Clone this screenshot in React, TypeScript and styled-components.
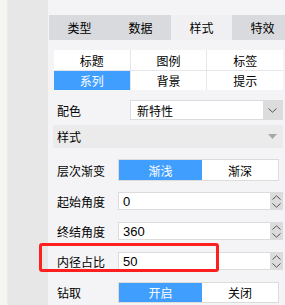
import React from 'react';
import styled, { createGlobalStyle } from 'styled-components';

const Global = createGlobalStyle`
  html, body { margin: 0; padding: 0; background: #f4f4f6; }
  body { font-family: "Noto Sans CJK SC", "Liberation Sans", sans-serif; font-size: 12px; color: #000; }
`

const Page = styled.div`
  display: flex;
  width: 285px;
  height: 305px;
  overflow: hidden;
`

const Edge = styled.div`
  width: 7px;
  background: #f6f6f1;
  border-right: 1px solid #ececec;
`

const Side = styled.div`
  width: 40px;
  background: #e7e7e7;
`

const Panel = styled.div`
  flex: 1;
  min-width: 0;
  padding-left: 1px;
  background: #f4f4f6;
`

const TabBar = styled.div`
  display: flex;
  margin-top: 15px;
  height: 25px;
  width: 244px;
`

const Tab = styled.div<{ $on?: boolean }>`
  flex: 0 0 61px;
  display: flex;
  align-items: center;
  justify-content: center;
  background: ${p => p.$on ? '#f0f0f2' : '#d9dadd'};
  font-size: 12px;
`

const SubGrid = styled.div`
  display: grid;
  grid-template-columns: repeat(3, 1fr);
  grid-template-rows: 20px 19px;
  gap: 1px;
  margin: 10px 2px 0 5px;
  background: #e6e6ea;
`

const SubTab = styled.div<{ $on?: boolean }>`
  display: flex;
  align-items: center;
  justify-content: center;
  background: ${p => p.$on ? '#409eff' : '#fff'};
  color: ${p => p.$on ? '#fff' : '#000'};
`

const Row = styled.div<{ $top: number; $h: number }>`
  position: relative;
  display: flex;
  align-items: center;
  margin-top: ${p => p.$top}px;
  height: ${p => p.$h}px;
  padding-left: 8px;
  padding-right: 2px;
`

const Label = styled.div<{ $w: number }>`
  width: ${p => p.$w}px;
  flex: 0 0 auto;
`

const Select = styled.div`
  flex: 1;
  height: 100%;
  display: flex;
  box-sizing: border-box;
  border: 1px solid #dcdcdc;
  background: #fff;
`

const SelectText = styled.div`
  flex: 1;
  display: flex;
  align-items: center;
  padding-left: 6px;
`

const SelectBtn = styled.div`
  width: 19px;
  display: flex;
  align-items: center;
  justify-content: center;
  background: #dcdcdc;
`

const Header = styled.div`
  display: flex;
  align-items: center;
  justify-content: space-between;
  margin: 5px 2px 0 4px;
  height: 23px;
  padding: 0 6px 0 4px;
  background: #ebebeb;
`

const Toggle = styled.div`
  width: 161px;
  height: 100%;
  display: grid;
  grid-template-columns: 83px 1fr;
  box-sizing: border-box;
  border: 1px solid #dcdcdc;
`

const ToggleBtn = styled.div<{ $on?: boolean }>`
  display: flex;
  align-items: center;
  justify-content: center;
  background: ${p => p.$on ? '#409eff' : '#fff'};
  color: ${p => p.$on ? '#fff' : '#000'};
  font-size: 12px;
`

const Num = styled.div`
  flex: 1;
  height: 100%;
  display: flex;
  box-sizing: border-box;
  border: 1px solid #dcdcdc;
  background: #fff;
`

const NumText = styled.div`
  flex: 1;
  display: flex;
  align-items: center;
  padding-left: 4px;
  font-family: "Liberation Sans", Arial, sans-serif;
  font-size: 13px;
`

const Spin = styled.div`
  width: 12px;
  display: flex;
  flex-direction: column;
  align-items: center;
  justify-content: space-around;
  background: #dcdcdc;
`

const Mark = styled.div`
  position: absolute;
  left: -10px;
  top: -9px;
  width: 180px;
  height: 29px;
  box-sizing: border-box;
  border: 3px solid #ff1f1f;
  border-radius: 3px;
  pointer-events: none;
`

const Chevron = ({ up }: { up?: boolean }) => (
  <svg width="9" height="5" viewBox="0 0 9 5">
    <path d={up ? 'M0.5 4.5L4.5 0.8L8.5 4.5' : 'M0.5 0.5L4.5 4.2L8.5 0.5'} fill="none" stroke="#555" strokeWidth="1" />
  </svg>
)

const Caret = () => (
  <svg width="9" height="5" viewBox="0 0 9 5">
    <path d="M0 0H9L4.5 5Z" fill="#a8a8a8" />
  </svg>
)

function NumberField({ value }: { value: string }) {
  return (
    <Num>
      <NumText>{value}</NumText>
      <Spin>
        <Chevron up />
        <Chevron />
      </Spin>
    </Num>
  )
}

export default function App() {
  return (
    <Page>
      <Global />
      <Edge />
      <Side />
      <Panel>
        <TabBar>
          <Tab>类型</Tab>
          <Tab>数据</Tab>
          <Tab $on>样式</Tab>
          <Tab>特效</Tab>
        </TabBar>
        <SubGrid>
          <SubTab>标题</SubTab>
          <SubTab>图例</SubTab>
          <SubTab>标签</SubTab>
          <SubTab $on>系列</SubTab>
          <SubTab>背景</SubTab>
          <SubTab>提示</SubTab>
        </SubGrid>
        <Row $top={10} $h={20}>
          <Label $w={73}>配色</Label>
          <Select>
            <SelectText>新特性</SelectText>
            <SelectBtn><Chevron /></SelectBtn>
          </Select>
        </Row>
        <Header>
          <span>样式</span>
          <Caret />
        </Header>
        <Row $top={11} $h={22}>
          <Label $w={61}>层次渐变</Label>
          <Toggle>
            <ToggleBtn $on>渐浅</ToggleBtn>
            <ToggleBtn>渐深</ToggleBtn>
          </Toggle>
        </Row>
        <Row $top={11} $h={18}>
          <Label $w={61}>起始角度</Label>
          <NumberField value="0" />
        </Row>
        <Row $top={12} $h={18}>
          <Label $w={61}>终结角度</Label>
          <NumberField value="360" />
        </Row>
        <Row $top={12} $h={18}>
          <Mark />
          <Label $w={61}>内径占比</Label>
          <NumberField value="50" />
        </Row>
        <Row $top={12} $h={21}>
          <Label $w={61}>钻取</Label>
          <Toggle>
            <ToggleBtn $on>开启</ToggleBtn>
            <ToggleBtn>关闭</ToggleBtn>
          </Toggle>
        </Row>
      </Panel>
    </Page>
  )
}
